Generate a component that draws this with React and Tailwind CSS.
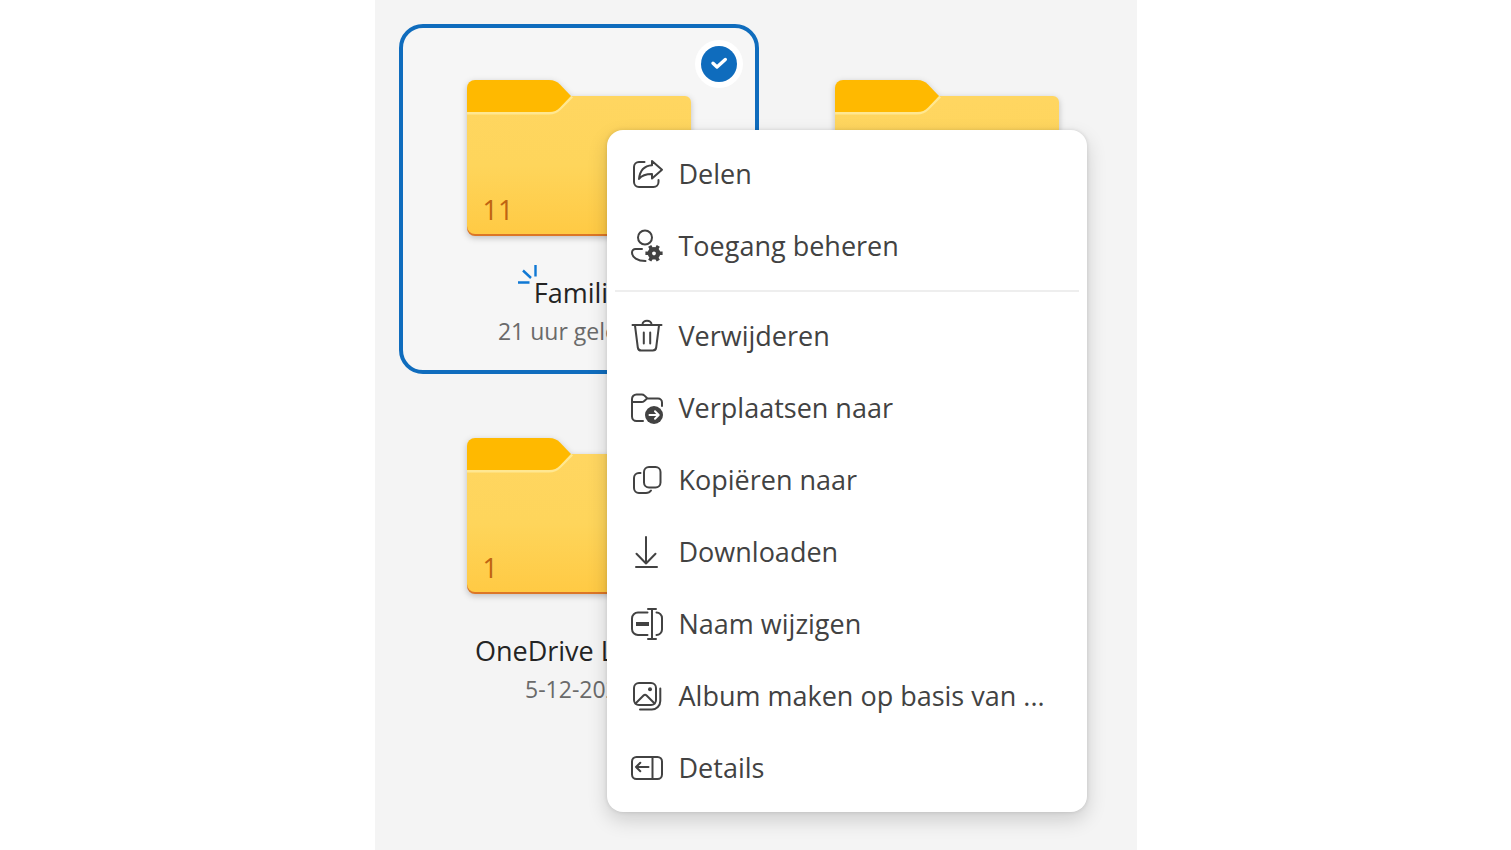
import React, { useState } from 'react';

const menuGroups = [
  [
    { id: 'share', label: 'Delen' },
    { id: 'access', label: 'Toegang beheren' },
  ],
  [
    { id: 'delete', label: 'Verwijderen' },
    { id: 'move', label: 'Verplaatsen naar' },
    { id: 'copy', label: 'Kopiëren naar' },
    { id: 'download', label: 'Downloaden' },
    { id: 'rename', label: 'Naam wijzigen' },
    { id: 'album', label: 'Album maken op basis van ...' },
    { id: 'details', label: 'Details' },
  ],
];

const folders = [
  { id: 1, name: 'Familie', date: '21 uur geleden', count: 11, isNew: true },
  { id: 2 },
  { id: 3, name: 'OneDrive Lokaal', date: '5-12-2024', count: 1 },
];

const iconShapes = {
  share: (
    <>
      <path d="M17.500 8H12a5 5 0 0 0-5 5v15a5 5 0 0 0 5 5h14.500a5 5 0 0 0 5-5v-2" />
      <path d="M25 7l10 8.700-10 8.800v-4.500c-5.500 0-10 1-13 5 .8-8 5-13.300 13-13.800z" />
    </>
  ),
  access: (
    <>
      <circle cx="18" cy="11.500" r="7" />
      <path d="M15 23H8.500A3.500 3.500 0 0 0 5 26.500C5 31.500 10.500 35 18.500 35" />
      <g transform="translate(27 27.300)">
        <circle r="4.100" strokeWidth="4.400" />
        <path
          d="M-2.600-4.500L-4.300-7.400M2.600-4.500L4.300-7.400M-2.600 4.500L-4.300 7.400M2.600 4.500L4.300 7.400M-5.200 0H-8.600M5.200 0H8.600"
          strokeWidth="3.600"
          strokeLinecap="butt"
        />
      </g>
    </>
  ),
  delete: (
    <path d="M5.500 9h29M15.500 8.500a4.500 3.800 0 0 1 9 0M8 9.500l2.800 22a3.500 3.500 0 0 0 3.500 3h11.400a3.500 3.500 0 0 0 3.500-3L32 9.500M16.800 16.500v11M23.200 16.500v11" />
  ),
  move: (
    <>
      <path d="M16 33H9.500a4.500 4.500 0 0 1-4.500-4.500V11a4.500 4.500 0 0 1 4.500-4.500h5.300a4 4 0 0 1 2.700 1.100l3 2.900H31a4 4 0 0 1 4 4V18M5 14h9.500c1.100 0 2-.4 2.800-1.100l2.700-2.400" />
      <circle cx="27" cy="27" r="9" fill="currentColor" stroke="none" />
      <path d="M22.500 27h9M28 23.300l3.700 3.700-3.700 3.700" stroke="#fff" />
    </>
  ),
  copy: (
    <>
      <rect x="17" y="7" width="16.500" height="20.500" rx="5" />
      <path d="M13.500 13h-1.500a5 5 0 0 0-5 5v10a5 5 0 0 0 5 5h7c2.500 0 4-1 5-2.500" />
    </>
  ),
  download: <path d="M19 5v26.500M9.500 21.800l9.500 9.700 9.500-9.700M9 35h21" />,
  rename: (
    <>
      <path d="M20.500 8.500H11a6 6 0 0 0-6 6v10.500a6 6 0 0 0 6 6h9.500M29.500 8.500a5.500 5.500 0 0 1 5.500 5.500v11.500a5.500 5.500 0 0 1-5.500 5.500M25 5v30M21 5h8M21 35h8" />
      <path d="M9 20h13" strokeWidth="4" strokeLinecap="butt" />
    </>
  ),
  album: (
    <>
      <rect x="7" y="7" width="22" height="22" rx="5" />
      <path d="M33.300 12.500v12.500a8.500 8.500 0 0 1-8.500 8.500H13M8.500 27.500l8-8a2.200 2.200 0 0 1 3.100 0l8 8" />
      <circle cx="23" cy="13.200" r="2" fill="currentColor" stroke="none" />
    </>
  ),
  details: (
    <>
      <rect x="5" y="9" width="30" height="22" rx="4.500" />
      <path d="M25.500 9v22M9 19h12.500M13.300 14.700L9 19l4.300 4.300" />
    </>
  ),
};

const MenuIcon = ({ name }) => (
  <svg
    viewBox="0 0 40 40"
    className="size-10 shrink-0"
    fill="none"
    stroke="currentColor"
    strokeWidth="2"
    strokeLinecap="round"
    strokeLinejoin="round"
    aria-hidden="true"
  >
    {iconShapes[name]}
  </svg>
);

const FolderArt = ({ count }) => (
  <div className="grid w-56">
    <svg
      viewBox="0 0 224 156"
      className="col-start-1 row-start-1 w-full drop-shadow-[0_2px_3px_rgba(0,0,0,0.22)]"
      aria-hidden="true"
    >
      <defs>
        <linearGradient id="folderBody" x1="0" y1="0" x2="0" y2="1">
          <stop offset="0" stopColor="#ffd661" />
          <stop offset="0.5" stopColor="#fed55b" />
          <stop offset="1" stopColor="#ffca44" />
        </linearGradient>
      </defs>
      {/* Orange lower edge sits behind the body */}
      <path d="M0 120h224v28a8 8 0 0 1-8 8H8a8 8 0 0 1-8-8z" fill="#dc7626" />
      <path d="M0 32h83l21-16h114a6 6 0 0 1 6 6v124a8 8 0 0 1-8 8H8a8 8 0 0 1-8-8z" fill="url(#folderBody)" />
      <path d="M0 33h82c5 0 8-1.500 11-4.500L105 16.500" fill="none" stroke="#ffe791" strokeWidth="3" />
      <path d="M8 0h74c5 0 8 1.500 11 4.500L104 16 93 27.500c-3 3-6 4.500-11 4.500H0V8a8 8 0 0 1 8-8z" fill="#ffb900" />
    </svg>
    {count && (
      <span className="z-10 col-start-1 row-start-1 self-end pb-2 pl-4 text-[27px] leading-9 text-[#bf6412]">
        {count}
      </span>
    )}
  </div>
);

const NewMark = () => (
  <svg
    viewBox="0 0 20 20"
    className="absolute -top-2 -left-4 size-5"
    fill="none"
    stroke="#0f78d4"
    strokeWidth="2.400"
    aria-hidden="true"
  >
    <path d="M17.500 0v11.500M5 5.500l8 7.500M0 17.500h11.500" />
  </svg>
);

const FolderTile = ({ folder, selected, onToggle }) => (
  <li
    className={
      selected
        ? 'relative flex h-[350px] flex-col items-center rounded-3xl border-4 border-[#0f6cbd] bg-[#f6f6f6] pt-[52px]'
        : 'relative flex h-[350px] flex-col items-center rounded-3xl border-4 border-transparent pt-[52px]'
    }
  >
    {selected && (
      <label className="absolute top-3 right-3 grid size-12 cursor-pointer place-items-center rounded-full bg-white">
        <input
          type="checkbox"
          checked
          onChange={() => onToggle(folder.id)}
          aria-label={folder.name}
          className="col-start-1 row-start-1 size-9 appearance-none rounded-full bg-[#0f6cbd]"
        />
        <svg
          viewBox="0 0 36 36"
          className="pointer-events-none col-start-1 row-start-1 size-9"
          fill="none"
          stroke="#fff"
          strokeWidth="3.400"
          strokeLinecap="round"
          strokeLinejoin="round"
          aria-hidden="true"
        >
          <path d="M12 17.200l4 3.800 8.300-7.500" />
        </svg>
      </label>
    )}
    <FolderArt count={folder.count} />
    {folder.name && (
      <>
        <h2 className="relative mt-[37px] text-[27px] leading-10 text-[#242424]">
          {folder.isNew && <NewMark />}
          {folder.name}
        </h2>
        <p className="text-[23px] leading-9 text-[#6a6a6a]">{folder.date}</p>
      </>
    )}
  </li>
);

const ContextMenu = () => (
  <div
    role="menu"
    className="absolute top-[130px] left-[232px] z-20 w-[480px] rounded-2xl bg-white p-2 shadow-[0_0_4px_rgba(0,0,0,0.12),0_8px_20px_rgba(0,0,0,0.16)]"
  >
    {menuGroups.map((group, index) => (
      <React.Fragment key={index}>
        {index > 0 && <hr className="my-2 border-t-2 border-[#eeeeee]" />}
        {group.map(item => (
          <button
            key={item.id}
            type="button"
            role="menuitem"
            className="flex h-[72px] w-full items-center gap-3 rounded-lg px-3 text-left text-[27px] leading-10 whitespace-nowrap text-[#424242]"
          >
            <MenuIcon name={item.id} />
            {item.label}
          </button>
        ))}
      </React.Fragment>
    ))}
  </div>
);

const App = () => {
  const [selectedIds, setSelectedIds] = useState([1]);

  const handleToggle = (id) => {
    setSelectedIds(prev => (prev.includes(id) ? prev.filter(x => x !== id) : [...prev, id]));
  };

  return (
    <div className="min-h-screen bg-white font-['Open_Sans',sans-serif]">
      <main className="relative mx-auto min-h-screen w-full max-w-[762px] bg-[#f4f4f4] pt-6 pr-[10px] pl-6">
        <ul className="grid grid-cols-2 gap-2">
          {folders.map(folder => (
            <FolderTile
              key={folder.id}
              folder={folder}
              selected={selectedIds.includes(folder.id)}
              onToggle={handleToggle}
            />
          ))}
        </ul>
        <ContextMenu />
      </main>
    </div>
  );
};

export default App;
